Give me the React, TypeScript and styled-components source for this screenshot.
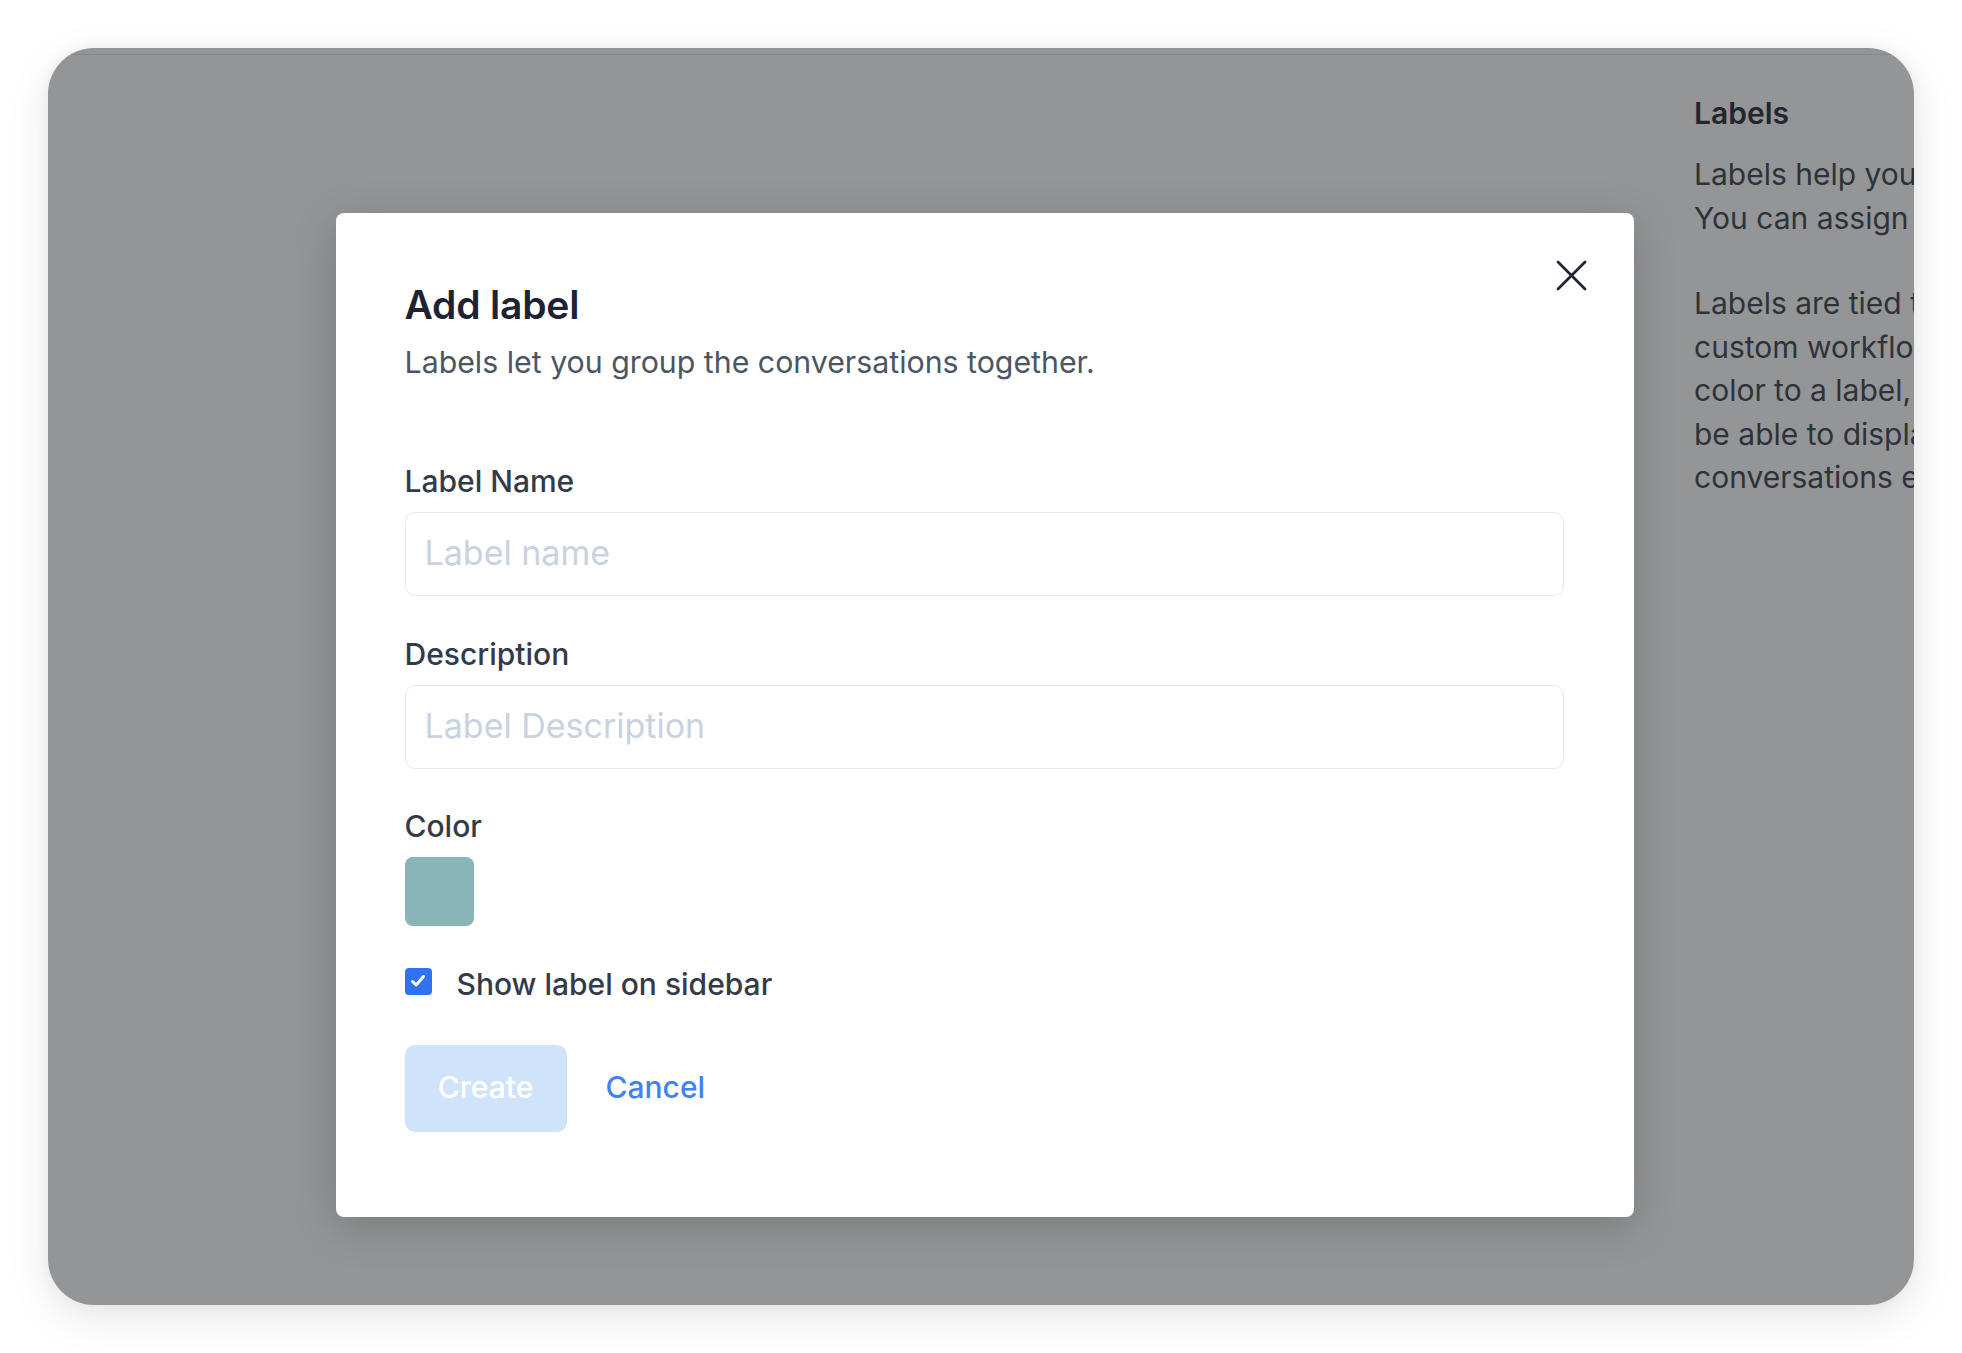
import React from "react";
import styled, { createGlobalStyle } from "styled-components";

const GlobalStyle = createGlobalStyle`
  html, body {
    margin: 0;
    padding: 0;
    background: #ffffff;
    font-family: Inter, "Noto Sans", "Liberation Sans", sans-serif;
  }
  * { box-sizing: border-box; }
`;

const Stage = styled.div`
  width: 1962px;
  height: 1353px;
  padding: 48px;
  background: #ffffff;
`;

const Frame = styled.div`
  position: relative;
  height: 100%;
  border-radius: 46px;
  overflow: hidden;
  background: #ffffff;
  box-shadow: 0 12px 44px rgba(0, 0, 0, 0.1), 0 0 14px rgba(0, 0, 0, 0.05);
`;

const TopStrip = styled.div`
  height: 7px;
  border-bottom: 1px solid #e2e4e8;
`;

const Page = styled.div`
  display: grid;
  grid-template-columns: 1646px 1fr;
  height: 100%;
`;

const MainArea = styled.div``;

const SideColumn = styled.aside`
  padding-top: 38px;
  overflow: hidden;
  white-space: nowrap;
`;

const SideTitle = styled.h3`
  margin: 0;
  font-size: 30px;
  line-height: 40px;
  font-weight: 600;
  color: #1b212c;
`;

const SidePara = styled.p`
  margin: 20px 0 0;
  font-size: 30px;
  line-height: 43.5px;
  font-weight: 400;
  color: #333843;
  & + & {
    margin-top: 42px;
  }
`;

const Overlay = styled.div`
  position: absolute;
  inset: 0;
  background: rgba(42, 44, 48, 0.5);
  display: flex;
  justify-content: center;
  align-items: flex-start;
  padding-top: 165px;
  padding-left: 7px;
`;

const Dialog = styled.div`
  position: relative;
  width: 1298px;
  background: #ffffff;
  border-radius: 8px;
  padding: 68px 70px 85px 69px;
  box-shadow: 0 10px 44px rgba(0, 0, 0, 0.18);
  display: flex;
  flex-direction: column;
`;

const CloseButton = styled.button`
  position: absolute;
  top: 47px;
  right: 47px;
  width: 31px;
  height: 31px;
  padding: 0;
  border: 0;
  background: transparent;
  cursor: pointer;
  display: flex;
  align-items: center;
  justify-content: center;
`;

const Title = styled.h2`
  margin: 0;
  font-size: 39px;
  line-height: 47px;
  font-weight: 600;
  color: #1c2434;
  letter-spacing: -0.2px;
`;

const Subtitle = styled.p`
  margin: 14px 0 0;
  font-size: 30.3px;
  line-height: 40px;
  font-weight: 400;
  color: #4b5563;
`;

const Form = styled.form`
  margin-top: 79px;
  display: flex;
  flex-direction: column;
`;

const Field = styled.div<{ $gap?: number }>`
  display: flex;
  flex-direction: column;
  gap: 10px;
  margin-top: ${(p) => p.$gap ?? 0}px;
`;

const FieldLabel = styled.label`
  font-size: 30px;
  line-height: 41px;
  font-weight: 500;
  color: #343b48;
`;

const TextInput = styled.input`
  width: 100%;
  height: 84px;
  border: 1.5px solid #e3e8ef;
  border-radius: 10px;
  padding: 0 0 4px 19px;
  font-family: inherit;
  font-size: 34px;
  color: #1f2937;
  background: #ffffff;
  outline: none;
  &::placeholder {
    color: #c9d2de;
  }
`;

const Swatch = styled.div<{ $color: string }>`
  width: 69px;
  height: 69px;
  border-radius: 8px;
  background: ${(p) => p.$color};
`;

const CheckRow = styled.label`
  margin-top: 37px;
  display: flex;
  align-items: center;
  gap: 25px;
  font-size: 30px;
  line-height: 42px;
  font-weight: 500;
  color: #343b48;
`;

const CheckBox = styled.span`
  width: 27px;
  height: 27px;
  border-radius: 4px;
  background: #2f72f2;
  display: flex;
  align-items: center;
  justify-content: center;
  margin-top: -6px;
  flex-shrink: 0;
`;

const Actions = styled.div`
  margin-top: 40px;
  display: flex;
  align-items: center;
  gap: 39px;
`;

const PrimaryButton = styled.button`
  width: 162px;
  height: 87px;
  border: 0;
  border-radius: 10px;
  background: #cfe3fa;
  color: #ffffff;
  font-family: inherit;
  font-size: 30px;
  font-weight: 500;
  padding: 0 0 4px;
  cursor: not-allowed;
`;

const LinkButton = styled.button`
  border: 0;
  background: transparent;
  padding: 0 0 4px;
  color: #3f83f3;
  font-family: inherit;
  font-size: 30px;
  font-weight: 500;
  cursor: pointer;
`;

export default function App() {
  return (
    <>
      <GlobalStyle />
      <Stage>
        <Frame>
          <TopStrip />
          <Page>
            <MainArea />
            <SideColumn>
              <SideTitle>Labels</SideTitle>
              <SidePara>
                Labels help you to categorize and prioritize conversations and leads.
                <br />
                You can assign a label to a conversation or contact using the side panel.
              </SidePara>
              <SidePara>
                Labels are tied to the account and can be used to create
                <br />
                custom workflows in your organization. You can assign custom
                <br />
                color to a label, it makes it easier to identify the label. You will
                <br />
                be able to display the label on the sidebar to filter the
                <br />
                conversations easily.
              </SidePara>
            </SideColumn>
          </Page>
          <Overlay>
            <Dialog>
              <CloseButton aria-label="Close">
                <svg width="31" height="31" viewBox="0 0 31 31" fill="none">
                  <path d="M2 2L29 29M29 2L2 29" stroke="#1f2633" strokeWidth="2.8" strokeLinecap="round" />
                </svg>
              </CloseButton>
              <Title>Add label</Title>
              <Subtitle>Labels let you group the conversations together.</Subtitle>
              <Form onSubmit={(e) => e.preventDefault()}>
                <Field>
                  <FieldLabel>Label Name</FieldLabel>
                  <TextInput placeholder="Label name" />
                </Field>
                <Field $gap={38}>
                  <FieldLabel>Description</FieldLabel>
                  <TextInput placeholder="Label Description" />
                </Field>
                <Field $gap={37}>
                  <FieldLabel>Color</FieldLabel>
                  <Swatch $color="#89b5b9" />
                </Field>
                <CheckRow>
                  <CheckBox>
                    <svg width="18" height="18" viewBox="0 0 18 18" fill="none">
                      <path d="M3.5 9.5L7.2 13L14.5 4.5" stroke="#ffffff" strokeWidth="3" strokeLinecap="round" strokeLinejoin="round" />
                    </svg>
                  </CheckBox>
                  Show label on sidebar
                </CheckRow>
                <Actions>
                  <PrimaryButton type="submit">Create</PrimaryButton>
                  <LinkButton type="button">Cancel</LinkButton>
                </Actions>
              </Form>
            </Dialog>
          </Overlay>
        </Frame>
      </Stage>
    </>
  );
}
